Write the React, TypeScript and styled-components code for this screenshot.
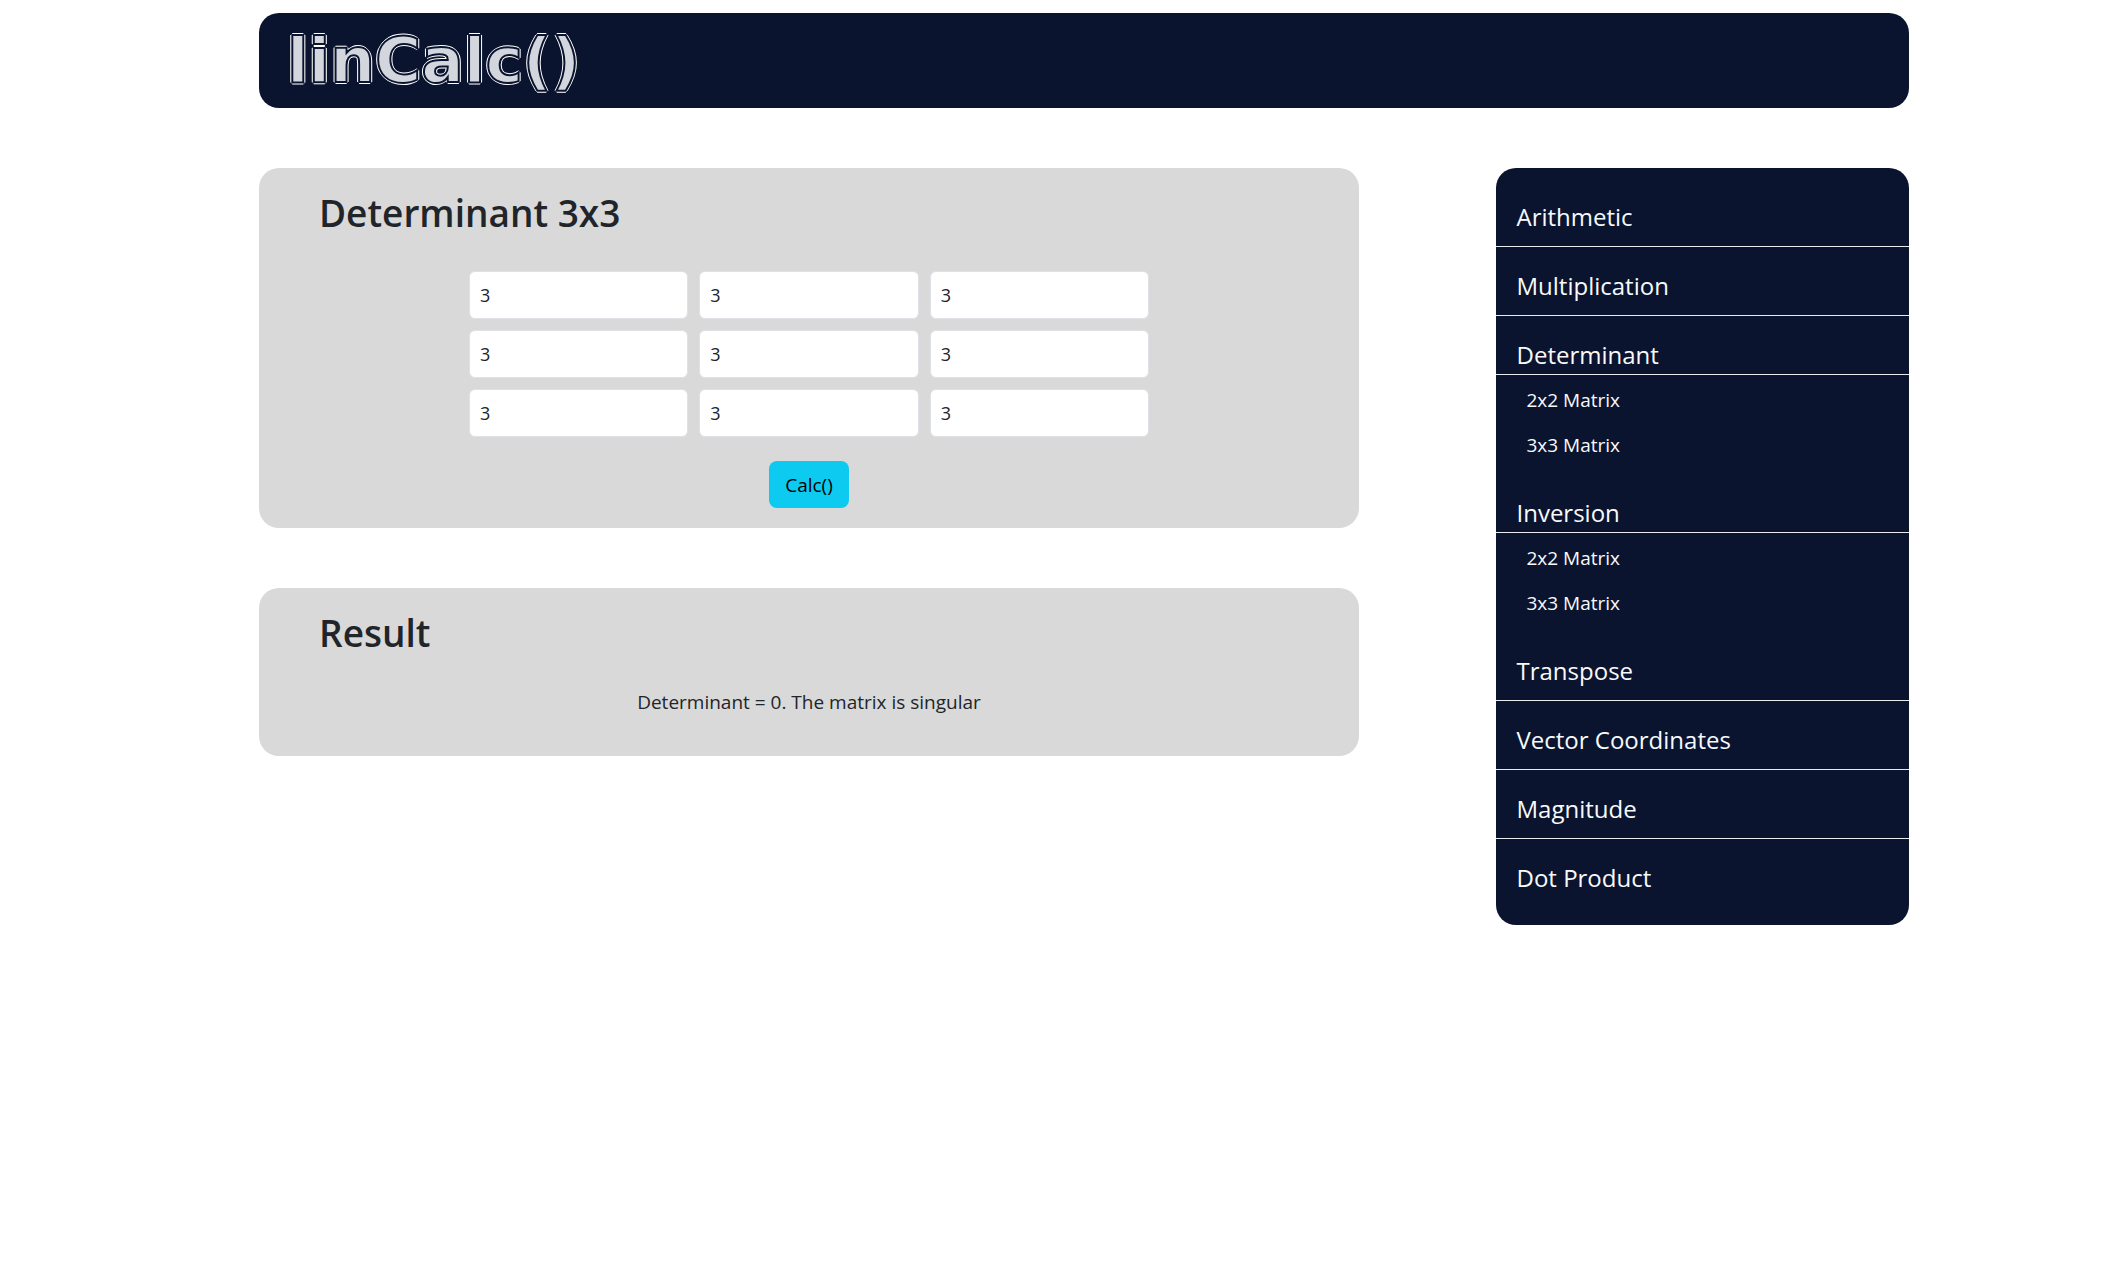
import React, { useState } from "react";
import styled, { createGlobalStyle } from "styled-components";

const navy = "#0a142f";
const ink = "#212529";

const GlobalStyle = createGlobalStyle`
  *, *::before, *::after { box-sizing: border-box; }
  body {
    margin: 0;
    background: #fff;
    color: ${ink};
    font-family: "Segoe UI", "Open Sans", "Noto Sans", sans-serif;
    font-size: 19px;
    line-height: 30px;
  }
`;

const Page = styled.div`
  padding: 13px 216px 60px 259px;
`;

const Header = styled.header`
  display: flex;
  align-items: center;
  height: 95px;
  padding: 0 28px;
  border-radius: 20px;
  background: ${navy};
`;

const Logo = styled.a`
  font-family: "DejaVu Sans", sans-serif;
  font-weight: 700;
  font-size: 63px;
  line-height: 68px;
  text-decoration: none;
  color: #d3d6dd;
  -webkit-text-stroke: 2px ${navy};
  text-shadow: 2px 0 #fff, -2px 0 #fff, 0 2px #fff, 0 -2px #fff,
    1px 1px #fff, -1px -1px #fff, 1px -1px #fff, -1px 1px #fff;
`;

const Columns = styled.div`
  display: grid;
  grid-template-columns: 8fr 3fr;
  column-gap: calc(100% / 12);
  align-items: start;
  margin-top: 60px;
`;

const Main = styled.main`
  display: flex;
  flex-direction: column;
  gap: 60px;
`;

const Card = styled.section<{ $bottom: number }>`
  padding: 21px 60px ${(p) => p.$bottom}px;
  border-radius: 20px;
  background: #d9d9d9;
`;

const Title = styled.h1`
  margin: 0 0 30px;
  font-size: 37px;
  font-weight: 600;
  line-height: 48px;
`;

const Form = styled.form`
  display: flex;
  flex-direction: column;
  align-items: center;
  gap: 24px;
  padding-top: 4px;
`;

const Matrix = styled.div`
  display: grid;
  grid-template-columns: repeat(3, 1fr);
  gap: 11px;
  width: 100%;
  max-width: 680px;
`;

const Cell = styled.input`
  min-width: 0;
  height: 48px;
  padding: 0 10px;
  border: 1px solid #dee2e6;
  border-radius: 6px;
  background: #fff;
  color: ${ink};
  font: inherit;
  font-size: 18px;
`;

const CalcButton = styled.button`
  height: 47px;
  padding: 0 16px;
  border: 0;
  border-radius: 8px;
  background: #0dcaf0;
  color: #000;
  font: inherit;
  cursor: pointer;
`;

const Answer = styled.p`
  margin: 0;
  text-align: center;
`;

const Sidebar = styled.nav`
  padding: 10px 0 17px;
  border-radius: 20px;
  background: ${navy};
`;

const NavList = styled.ul`
  margin: 0;
  padding: 0;
  list-style: none;
`;

const NavLink = styled.a<{ $group?: boolean; $last?: boolean }>`
  display: block;
  padding: 20px 20px ${(p) => (p.$group ? 0 : 10)}px;
  border-bottom: 1px solid ${(p) => (p.$last ? "transparent" : "#e9ebef")};
  color: #f8f9fa;
  font-size: 24px;
  line-height: 38px;
  text-decoration: none;
`;

const SubList = styled(NavList)`
  padding: 3px 0 6px;
`;

const SubLink = styled.a`
  display: block;
  padding: 0 30px;
  color: #f8f9fa;
  line-height: 45px;
  text-decoration: none;
`;

type Entry = { label: string; children?: string[] };

const entries: Entry[] = [
  { label: "Arithmetic" },
  { label: "Multiplication" },
  { label: "Determinant", children: ["2x2 Matrix", "3x3 Matrix"] },
  { label: "Inversion", children: ["2x2 Matrix", "3x3 Matrix"] },
  { label: "Transpose" },
  { label: "Vector Coordinates" },
  { label: "Magnitude" },
  { label: "Dot Product" },
];

function determinant(m: number[]) {
  const [a, b, c, d, e, f, g, h, i] = m;
  return a * (e * i - f * h) - b * (d * i - f * g) + c * (d * h - e * g);
}

export default function App() {
  const [cells, setCells] = useState<string[]>(Array(9).fill("3"));
  const [result, setResult] = useState(0);

  const update = (index: number, value: string) =>
    setCells((old) => old.map((cell, i) => (i === index ? value : cell)));

  const calculate = (event: React.FormEvent) => {
    event.preventDefault();
    setResult(determinant(cells.map(Number)));
  };

  return (
    <>
      <GlobalStyle />
      <Page>
        <Header>
          <Logo href="#">linCalc()</Logo>
        </Header>
        <Columns>
          <Main>
            <Card $bottom={20}>
              <Title>Determinant 3x3</Title>
              <Form onSubmit={calculate}>
                <Matrix>
                  {cells.map((cell, i) => (
                    <Cell
                      key={i}
                      aria-label={`Row ${Math.floor(i / 3) + 1}, column ${(i % 3) + 1}`}
                      value={cell}
                      onChange={(e) => update(i, e.target.value)}
                    />
                  ))}
                </Matrix>
                <CalcButton type="submit">Calc()</CalcButton>
              </Form>
            </Card>
            <Card $bottom={39}>
              <Title as="h2">Result</Title>
              <Answer>
                {`Determinant = ${result}.${result === 0 ? " The matrix is singular" : ""}`}
              </Answer>
            </Card>
          </Main>
          <Sidebar aria-label="Calculators">
            <NavList>
              {entries.map((entry, i) => (
                <li key={entry.label}>
                  <NavLink
                    href="#"
                    $group={!!entry.children}
                    $last={i === entries.length - 1}
                  >
                    {entry.label}
                  </NavLink>
                  {entry.children && (
                    <SubList>
                      {entry.children.map((child) => (
                        <li key={child}>
                          <SubLink href="#">{child}</SubLink>
                        </li>
                      ))}
                    </SubList>
                  )}
                </li>
              ))}
            </NavList>
          </Sidebar>
        </Columns>
      </Page>
    </>
  );
}
